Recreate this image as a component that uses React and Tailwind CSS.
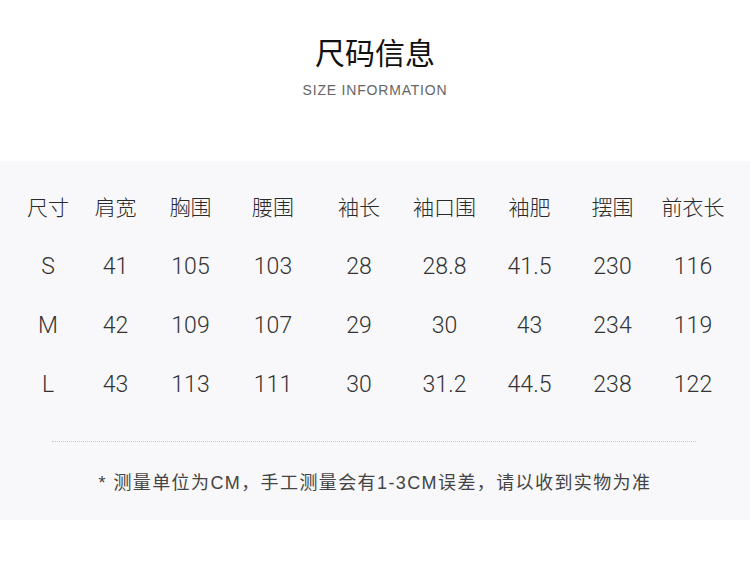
import React from "react";

const headers = ["尺寸", "肩宽", "胸围", "腰围", "袖长", "袖口围", "袖肥", "摆围", "前衣长"];

const rows = [
  ["S", "41", "105", "103", "28", "28.8", "41.5", "230", "116"],
  ["M", "42", "109", "107", "29", "30", "43", "234", "119"],
  ["L", "43", "113", "111", "30", "31.2", "44.5", "238", "122"],
];

const font = { fontFamily: '"Liberation Sans", "Noto Sans CJK SC", sans-serif' };
const thin = { fontFamily: 'Roboto, "Noto Sans CJK SC", sans-serif' };

export default function App() {
  return (
    <div className="w-[750px] h-[568px] bg-white text-[#333]" style={font}>
      {/* Title */}
      <div className="pt-[36px] flex flex-col items-center">
        <h1 className="text-[30px] leading-[36px] text-[#111]">尺码信息</h1>
        <p className="mt-[8px] text-[14px] leading-[20px] tracking-[0.8px] text-[#666]">
          SIZE INFORMATION
        </p>
      </div>

      {/* Size table */}
      <div className="mt-[61px] h-[359px] bg-[#f8f8fa] pt-[18px]">
        <div
          className="pl-[16px] grid grid-cols-[64px_71px_79px_86px_86px_85px_85px_81px_80px]"
          style={thin}
        >
          {headers.map((h) => (
            <div key={h} className="h-[59px] flex items-center justify-center text-[21px] font-light text-[#2a2a2a]">
              {h}
            </div>
          ))}
          {rows.map((r) =>
            r.map((v, i) => (
              <div
                key={r[0] + i}
                className="h-[59px] flex items-center justify-center text-[23px] font-light text-[#333]"
              >
                {v}
              </div>
            ))
          )}
        </div>

        <div className="mt-[26px] mx-[52px] w-[644px] border-t border-dotted border-[#c8c8c8]" />

        <p className="mt-[29px] text-center text-[18px] leading-[24px] tracking-[1.4px] text-[#444]">
          * 测量单位为CM，手工测量会有1-3CM误差，请以收到实物为准
        </p>
      </div>
    </div>
  );
}
